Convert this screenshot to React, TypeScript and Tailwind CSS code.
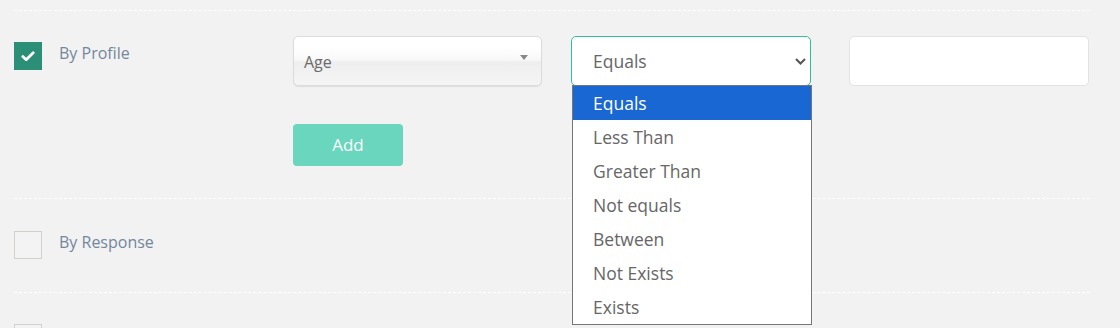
import React from 'react';

const operators = ['Equals', 'Less Than', 'Greater Than', 'Not equals', 'Between', 'Not Exists', 'Exists'];

const CheckBox: React.FC<{ checked?: boolean }> = ({ checked }) =>
    checked ? (
        <div className="flex h-[28px] w-[28px] shrink-0 items-center justify-center bg-[#2a8f76]">
            <svg width="14" height="11" viewBox="0 0 14 11" fill="none">
                <path d="M1.8 5.6 L5.2 8.8 L12.2 1.8" stroke="#fff" strokeWidth="2.8" strokeLinecap="round" strokeLinejoin="round" />
            </svg>
        </div>
    ) : (
        <div className="h-[28px] w-[28px] shrink-0 border border-[#d3cfcb] bg-[#f3f3f3]" />
    );

export default function App() {
    return (
        <div className="h-[328px] w-[1120px] overflow-hidden bg-[#f2f2f2] pt-[10px] font-['Open_Sans',sans-serif]">
            <div className="ml-[14px] w-[1076px]">

                {/* By Profile */}
                <div className="flex h-[188px] border-t border-dashed border-white pt-[25px]">
                    <div className="mt-[6px] flex w-[279px] items-start gap-[17px] self-start">
                        <CheckBox checked />
                        <span className="-mt-[1px] text-[16px] leading-[24px] text-[#73879c]">By Profile</span>
                    </div>

                    <div className="flex flex-col items-start">
                        <div className="flex">
                            <div className="relative flex h-[50px] w-[249px] items-center rounded-[5px] border border-[#dcdcdc] bg-[linear-gradient(#fff_20%,#f8f8f8_48%,#eeeeee_52%,#f5f5f5_100%)] pl-[10px] pt-[1px] shadow-[0_1px_1px_rgba(0,0,0,0.08)]">
                                <span className="text-[16px] text-[#6b6b6b]">Age</span>
                                <svg className="absolute right-[13px] top-[18px]" width="8" height="5" viewBox="0 0 8 5">
                                    <path d="M0 0 H8 L4 5 Z" fill="#888" />
                                </svg>
                            </div>

                            <div className="relative ml-[29px] w-[240px]">
                                <div className="flex h-[50px] items-center rounded-[5px] border border-[#2fbf9f] bg-white pl-[21px]">
                                    <span className="text-[17.5px] text-[#666]">Equals</span>
                                    <svg className="absolute right-[5px] top-[22px]" width="11" height="7" viewBox="0 0 11 7" fill="none">
                                        <path d="M1 1 L5.5 5.5 L10 1" stroke="#555" strokeWidth="2" />
                                    </svg>
                                </div>
                                <ul className="absolute left-[1px] top-[49px] z-10 w-[240px] border border-[#767676] bg-white">
                                    {operators.map((op, i) => (
                                        <li
                                            key={op}
                                            className={`flex h-[34px] items-center pl-[20px] text-[17.5px] ${i === 0 ? 'bg-[#1967d2] text-white' : 'text-[#666]'}`}
                                        >
                                            {op}
                                        </li>
                                    ))}
                                </ul>
                            </div>

                            <div className="ml-[38px] h-[50px] w-[240px] rounded-[5px] border border-[#e2e2e2] bg-white" />
                        </div>

                        <button className="mt-[38px] h-[42px] w-[110px] rounded-[4px] bg-[#69d6bd] text-[17px] text-white">
                            Add
                        </button>
                    </div>
                </div>

                {/* By Response */}
                <div className="flex h-[94px] items-start gap-[17px] border-t border-dashed border-white pt-[32px]">
                    <CheckBox />
                    <span className="-mt-[1px] text-[16px] leading-[24px] text-[#73879c]">By Response</span>
                </div>

                <div className="flex h-[60px] items-start border-t border-dashed border-white pt-[31px]">
                    <CheckBox />
                </div>
            </div>
        </div>
    );
}
